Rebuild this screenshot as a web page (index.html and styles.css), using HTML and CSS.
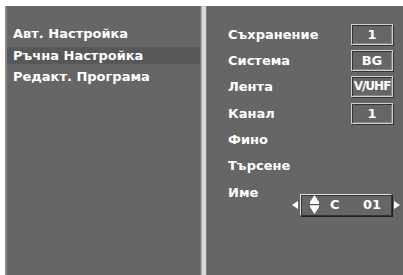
FILE: index.html
```html
<!DOCTYPE html>
<html lang="bg">
<head>
  <meta charset="UTF-8">
  <meta name="viewport" content="width=device-width, initial-scale=1.0">
  <title>Ръчна Настройка</title>
  <link rel="stylesheet" href="styles.css">
</head>
<body>

  <div class="screen">
    <!-- Лява колона: меню -->
    <div class="panel menu">
      <div class="menu-item">Авт. Настройка</div>
      <div class="menu-item active">Ръчна Настройка</div>
      <div class="menu-item">Редакт. Програма</div>
    </div>

    <div class="divider"></div>

    <!-- Дясна колона: настройки -->
    <div class="panel settings">
      <div class="row">
        <span class="label">Съхранение</span>
        <span class="value">1</span>
      </div>
      <div class="row">
        <span class="label">Система</span>
        <span class="value">BG</span>
      </div>
      <div class="row">
        <span class="label">Лента</span>
        <span class="value wide">V/UHF</span>
      </div>
      <div class="row">
        <span class="label">Канал</span>
        <span class="value">1</span>
      </div>
      <div class="row">
        <span class="label">Фино</span>
      </div>
      <div class="row">
        <span class="label">Търсене</span>
      </div>
      <div class="row name-row">
        <span class="label short">Име</span>
        <div class="name-ctrl">
          <span class="tri tri-left"></span>
          <div class="name-box">
            <svg class="updown" width="9" height="19" viewBox="0 0 9 19">
              <path d="M4.5 0 L9 7 L9 12 L4.5 19 L0 12 L0 7 Z" fill="#fff"/>
              <rect x="0" y="9" width="9" height="1.2" fill="#555"/>
            </svg>
            <span class="ch">C</span>
            <span class="num">01</span>
          </div>
          <span class="tri tri-right"></span>
        </div>
      </div>
    </div>
  </div>

</body>
</html>
```

FILE: styles.css
```css
body {
  margin: 0;
  background-color: #fff;
  font-family: 'DejaVu Sans', 'Liberation Sans', sans-serif;
  font-weight: bold;
  color: #fff;
}

.screen {
  display: flex;
  height: 275px;
  padding: 6px 0 0 5px;
  box-sizing: border-box;
}

.panel {
  background-color: #666;
  box-sizing: border-box;
}

.menu {
  width: 196px;
  padding-top: 19px;
  border-left: 2px solid #888;
  border-right: 1px solid #7a7a7a;
}

.menu-item {
  font-size: 13px;
  height: 17px;
  line-height: 17px;
  padding-left: 6px;
  margin-bottom: 4.5px;
}

.menu-item.active {
  background-color: #585858;
}

.divider {
  width: 4px;
  background-color: #d8d8d8;
  border-left: 1px solid #aaa;
}

.settings {
  flex: 1;
  padding: 15px 0 0 21px;
  border-left: 1px solid #7a7a7a;
}

.row {
  display: flex;
  align-items: center;
  height: 26.3px;
  font-size: 13px;
}

.label {
  width: 123px;
}

.value {
  width: 40px;
  height: 19px;
  line-height: 19px;
  text-align: center;
  border: 1px solid #d0d0d0;
  box-shadow: inset 1px 1px 0 #333, inset -1px -1px 0 #888, 1px 1px 0 #333;
  font-size: 13px;
}

.value.wide {
  font-size: 12px;
  letter-spacing: -1px;
  overflow: hidden;
  white-space: nowrap;
}

.name-row {
  align-items: flex-start;
  height: 45px;
  padding-top: 6px;
  box-sizing: border-box;
  line-height: 16px;
}

.label.short {
  width: 64px;
}

.name-ctrl {
  display: flex;
  align-items: center;
  margin-top: 9px;
}

.tri {
  width: 0;
  height: 0;
  border-top: 4px solid transparent;
  border-bottom: 4px solid transparent;
}

.tri-left {
  border-right: 6px solid #fff;
  margin-right: 2px;
}

.tri-right {
  border-left: 6px solid #fff;
  margin-left: 2px;
}

.name-box {
  display: flex;
  align-items: center;
  width: 92px;
  height: 22px;
  border-top: 1px solid #e0e0e0;
  border-left: 1px solid #e0e0e0;
  border-right: 1px solid #333;
  border-bottom: 1px solid #333;
  box-shadow: inset 1px 1px 0 #333, 1px 1px 0 #222;
  padding-left: 9px;
  box-sizing: border-box;
}

.updown {
  display: block;
}

.ch {
  margin-left: 11px;
}

.num {
  margin-left: auto;
  margin-right: 10px;
}
```
